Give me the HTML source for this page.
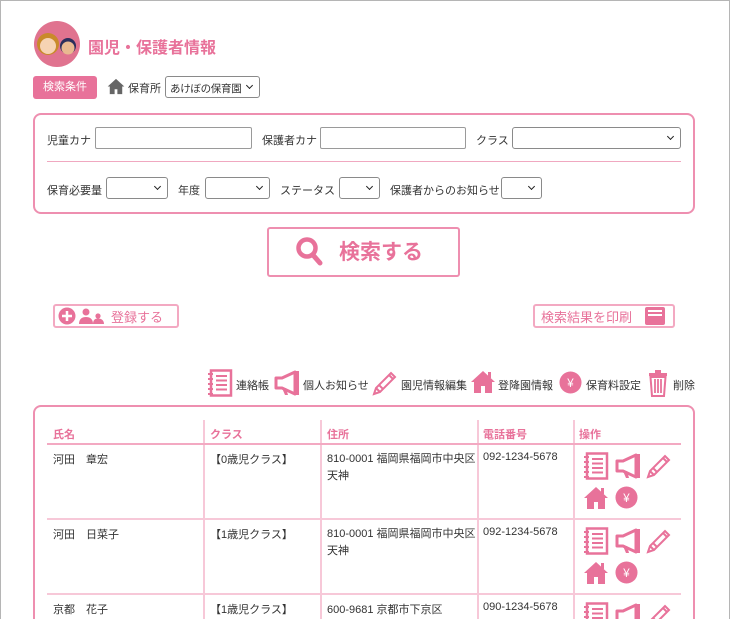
<!DOCTYPE html>
<html><head><meta charset="utf-8">
<style>
*{box-sizing:border-box;margin:0;padding:0}
html{width:730px;height:619px;overflow:hidden}
body{width:730px;height:619px;overflow:hidden;background:#fff;font-family:"Liberation Sans","Noto Sans CJK JP",sans-serif;color:#333;font-size:11px;position:relative}
.frame{position:absolute;left:0;top:0;width:730px;height:619px;border:1px solid #b5b5b5;border-bottom:none}
.a{position:absolute;white-space:nowrap}
.pink{color:#e8729a}
.inp{position:absolute;height:22px;border:1px solid #9a9a9a;border-radius:2px;background:#fff}
.sel{position:absolute;height:22px;border:1px solid #8a8a8a;border-radius:3px;background:#fff}
.sel:after{content:"";position:absolute;right:7px;top:6px;width:4px;height:4px;border-right:1.5px solid #222;border-bottom:1.5px solid #222;transform:rotate(45deg)}
.panel{position:absolute;border:2px solid #ee8fb0;border-radius:8px}
.vl{position:absolute;width:2px;background:#f7c8d8}
.hl{position:absolute;height:2px;background:#f7c8d8}
svg{position:absolute}
</style></head><body>
<div class="frame"></div>
<svg width="0" height="0" style="position:absolute">
<defs>
<symbol id="book" viewBox="0 0 26 28"><rect x="4" y="1.5" width="20" height="25" fill="none" stroke="#e8729a" stroke-width="2.5"/><g fill="#e8729a"><rect x="1" y="4" width="5" height="2"/><rect x="1" y="9" width="5" height="2"/><rect x="1" y="14" width="5" height="2"/><rect x="1" y="19" width="5" height="2"/><rect x="1" y="24" width="5" height="2"/><rect x="9" y="6" width="11" height="2"/><rect x="9" y="10.5" width="11" height="2"/><rect x="9" y="15" width="11" height="2"/><rect x="9" y="19.5" width="11" height="2"/></g></symbol>
<symbol id="mega" viewBox="0 0 28 26"><path d="M3 8h6l13-6v22L9 18H3z" fill="none" stroke="#e8729a" stroke-width="3" stroke-linejoin="round"/><path d="M9 18l3 7h3l-2-7" fill="#e8729a"/><rect x="23" y="1" width="3" height="24" fill="#e8729a"/></symbol>
<symbol id="pen" viewBox="0 0 28 28"><path d="M3 25l2-6L20 4l4 4L9 23z M5 19l4 4 M8 16l4 4 M18 6l4 4" fill="none" stroke="#e8729a" stroke-width="2"/></symbol>
<symbol id="house" viewBox="0 0 26 24"><path d="M13 1L1 12h3v11h7v-7h4v7h7V12h3z" fill="#e8729a"/><rect x="18" y="2" width="3" height="6" fill="#e8729a"/></symbol>
<symbol id="yen" viewBox="0 0 24 24"><circle cx="12" cy="12" r="11.5" fill="#e8729a"/><text x="12" y="16.5" font-size="12" fill="#fff" text-anchor="middle" font-family="Liberation Sans,sans-serif">¥</text></symbol>
<symbol id="trash" viewBox="0 0 22 28"><rect x="2" y="4" width="18" height="3" fill="#e8729a"/><rect x="8" y="1" width="6" height="3" fill="#e8729a"/><path d="M3.5 8h15l-1.5 19h-12z" fill="none" stroke="#e8729a" stroke-width="2"/><path d="M8 10v14M11 10v14M14 10v14" stroke="#e8729a" stroke-width="1.8"/></symbol>
</defs></svg>

<svg style="left:34px;top:21px" width="46" height="46" viewBox="0 0 46 46"><circle cx="23" cy="23" r="23" fill="#e0738f"/><circle cx="14" cy="23" r="11" fill="#c98a2a"/><circle cx="14" cy="25" r="8" fill="#f6d3b3"/><circle cx="34" cy="25" r="8" fill="#2b2e5c"/><circle cx="34" cy="27" r="6.5" fill="#e9b990"/></svg>
<div class="a pink" style="left:88px;top:34px;font-size:16px;font-weight:bold">園児・保護者情報</div>

<div class="a" style="left:33px;top:76px;width:64px;height:23px;background:#e8729a;border-radius:3px;color:#fff;font-size:11px;line-height:23px;text-align:center">検索条件</div>
<svg style="left:107px;top:78px" width="18" height="17" viewBox="0 0 26 24"><path d="M13 1L1 12h3v11h7v-7h4v7h7V12h3z" fill="#666"/></svg>
<div class="a" style="left:128px;top:80px;font-size:11px">保育所</div>
<div class="sel" style="left:165px;top:76px;width:95px;"><span class="a" style="left:4px;top:4px;font-size:10.5px;letter-spacing:-0.3px">あけぼの保育園</span></div>

<div class="panel" style="left:33px;top:113px;width:662px;height:101px"></div>
<div class="a" style="left:47px;top:132px">児童カナ</div>
<div class="inp" style="left:95px;top:127px;width:157px"></div>
<div class="a" style="left:262px;top:132px">保護者カナ</div>
<div class="inp" style="left:320px;top:127px;width:146px"></div>
<div class="a" style="left:476px;top:132px">クラス</div>
<div class="sel" style="left:512px;top:127px;width:169px"></div>
<div class="hl" style="left:47px;top:161px;width:634px;height:1px;background:#f0a8c0"></div>
<div class="a" style="left:47px;top:182px">保育必要量</div>
<div class="sel" style="left:106px;top:177px;width:62px"></div>
<div class="a" style="left:178px;top:182px">年度</div>
<div class="sel" style="left:205px;top:177px;width:65px"></div>
<div class="a" style="left:280px;top:182px">ステータス</div>
<div class="sel" style="left:339px;top:177px;width:41px"></div>
<div class="a" style="left:390px;top:182px">保護者からのお知らせ</div>
<div class="sel" style="left:501px;top:177px;width:41px"></div>

<div class="a" style="left:267px;top:227px;width:193px;height:50px;border:2px solid #ee8fb0;border-radius:3px"></div>
<svg style="left:295px;top:236px" width="30" height="32" viewBox="0 0 30 32"><circle cx="12" cy="12" r="8.5" fill="none" stroke="#e8729a" stroke-width="4.5"/><path d="M18 19l7 8" stroke="#e8729a" stroke-width="5" stroke-linecap="round"/></svg>
<div class="a pink" style="left:339px;top:236px;font-size:21px;font-weight:bold">検索する</div>

<div class="a" style="left:53px;top:304px;width:126px;height:24px;border:2px solid #f3a9c2;border-radius:3px"></div>
<svg style="left:58px;top:307px" width="50" height="18" viewBox="0 0 50 18"><circle cx="9" cy="9" r="8.5" fill="#e8729a"/><path d="M9 4v10M4 9h10" stroke="#fff" stroke-width="2.5"/><circle cx="28" cy="5" r="3.5" fill="#e8729a"/><path d="M21 17c0-5 3-7 7-7s7 2 7 7z" fill="#e8729a"/><circle cx="40" cy="9" r="2.6" fill="#e8729a"/><path d="M35 17c0-4 2-5.5 5-5.5s6 1.5 6 5.5z" fill="#e8729a"/></svg>
<div class="a pink" style="left:111px;top:307px;font-size:13px">登録する</div>
<div class="a" style="left:533px;top:304px;width:142px;height:24px;border:2px solid #f3a9c2;border-radius:3px"></div>
<div class="a pink" style="left:541px;top:307px;font-size:13px">検索結果を印刷</div>
<svg style="left:645px;top:307px" width="20" height="18" viewBox="0 0 20 18"><rect x="0" y="0" width="20" height="18" rx="2" fill="#e8729a"/><rect x="3" y="3" width="14" height="2" fill="#fff"/><rect x="3" y="7" width="14" height="2" fill="#fff"/></svg>

<svg style="left:207px;top:369px" width="26" height="28"><use href="#book"/></svg>
<div class="a" style="left:236px;top:377px">連絡帳</div>
<svg style="left:273px;top:370px" width="28" height="26"><use href="#mega"/></svg>
<div class="a" style="left:303px;top:377px">個人お知らせ</div>
<svg style="left:371px;top:369px" width="28" height="28"><use href="#pen"/></svg>
<div class="a" style="left:401px;top:377px">園児情報編集</div>
<svg style="left:470px;top:370px" width="26" height="24"><use href="#house"/></svg>
<div class="a" style="left:498px;top:377px">登降園情報</div>
<svg style="left:559px;top:371px" width="23" height="23"><use href="#yen"/></svg>
<div class="a" style="left:586px;top:377px">保育料設定</div>
<svg style="left:647px;top:369px" width="22" height="28"><use href="#trash"/></svg>
<div class="a" style="left:673px;top:377px">削除</div>

<div class="panel" style="left:33px;top:405px;width:662px;height:240px"></div>
<div class="vl" style="left:203px;top:420px;height:200px"></div>
<div class="vl" style="left:320px;top:420px;height:200px"></div>
<div class="vl" style="left:477px;top:420px;height:200px"></div>
<div class="vl" style="left:573px;top:420px;height:200px"></div>
<div class="hl" style="left:47px;top:443px;width:634px;background:#f3a9c2"></div>
<div class="hl" style="left:47px;top:518px;width:634px"></div>
<div class="hl" style="left:47px;top:593px;width:634px"></div>
<div class="a pink" style="left:53px;top:426px;font-weight:bold">氏名</div>
<div class="a pink" style="left:210px;top:426px;font-weight:bold">クラス</div>
<div class="a pink" style="left:327px;top:426px;font-weight:bold">住所</div>
<div class="a pink" style="left:483px;top:426px;font-weight:bold">電話番号</div>
<div class="a pink" style="left:579px;top:426px;font-weight:bold">操作</div>

<div class="a" style="left:53px;top:451px">河田　章宏</div>
<div class="a" style="left:210px;top:451px">【0歳児クラス】</div>
<div class="a" style="left:327px;top:451px;line-height:17px">810-0001 福岡県福岡市中央区<br>天神</div>
<div class="a" style="left:483px;top:451px">092-1234-5678</div>

<div class="a" style="left:53px;top:526px">河田　日菜子</div>
<div class="a" style="left:210px;top:526px">【1歳児クラス】</div>
<div class="a" style="left:327px;top:526px;line-height:17px">810-0001 福岡県福岡市中央区<br>天神</div>
<div class="a" style="left:483px;top:526px">092-1234-5678</div>

<div class="a" style="left:53px;top:601px">京都　花子</div>
<div class="a" style="left:210px;top:601px">【1歳児クラス】</div>
<div class="a" style="left:327px;top:601px">600-9681 京都市下京区</div>
<div class="a" style="left:483px;top:601px">090-1234-5678</div>

<svg style="left:583px;top:452px" width="26" height="28"><use href="#book"/></svg>
<svg style="left:614px;top:453px" width="28" height="26"><use href="#mega"/></svg>
<svg style="left:645px;top:452px" width="28" height="28"><use href="#pen"/></svg>
<svg style="left:583px;top:486px" width="26" height="24"><use href="#house"/></svg>
<svg style="left:615px;top:486px" width="23" height="23"><use href="#yen"/></svg>

<svg style="left:583px;top:527px" width="26" height="28"><use href="#book"/></svg>
<svg style="left:614px;top:528px" width="28" height="26"><use href="#mega"/></svg>
<svg style="left:645px;top:527px" width="28" height="28"><use href="#pen"/></svg>
<svg style="left:583px;top:561px" width="26" height="24"><use href="#house"/></svg>
<svg style="left:615px;top:561px" width="23" height="23"><use href="#yen"/></svg>

<svg style="left:583px;top:602px" width="26" height="28"><use href="#book"/></svg>
<svg style="left:614px;top:603px" width="28" height="26"><use href="#mega"/></svg>
<svg style="left:645px;top:602px" width="28" height="28"><use href="#pen"/></svg>
</body></html>
